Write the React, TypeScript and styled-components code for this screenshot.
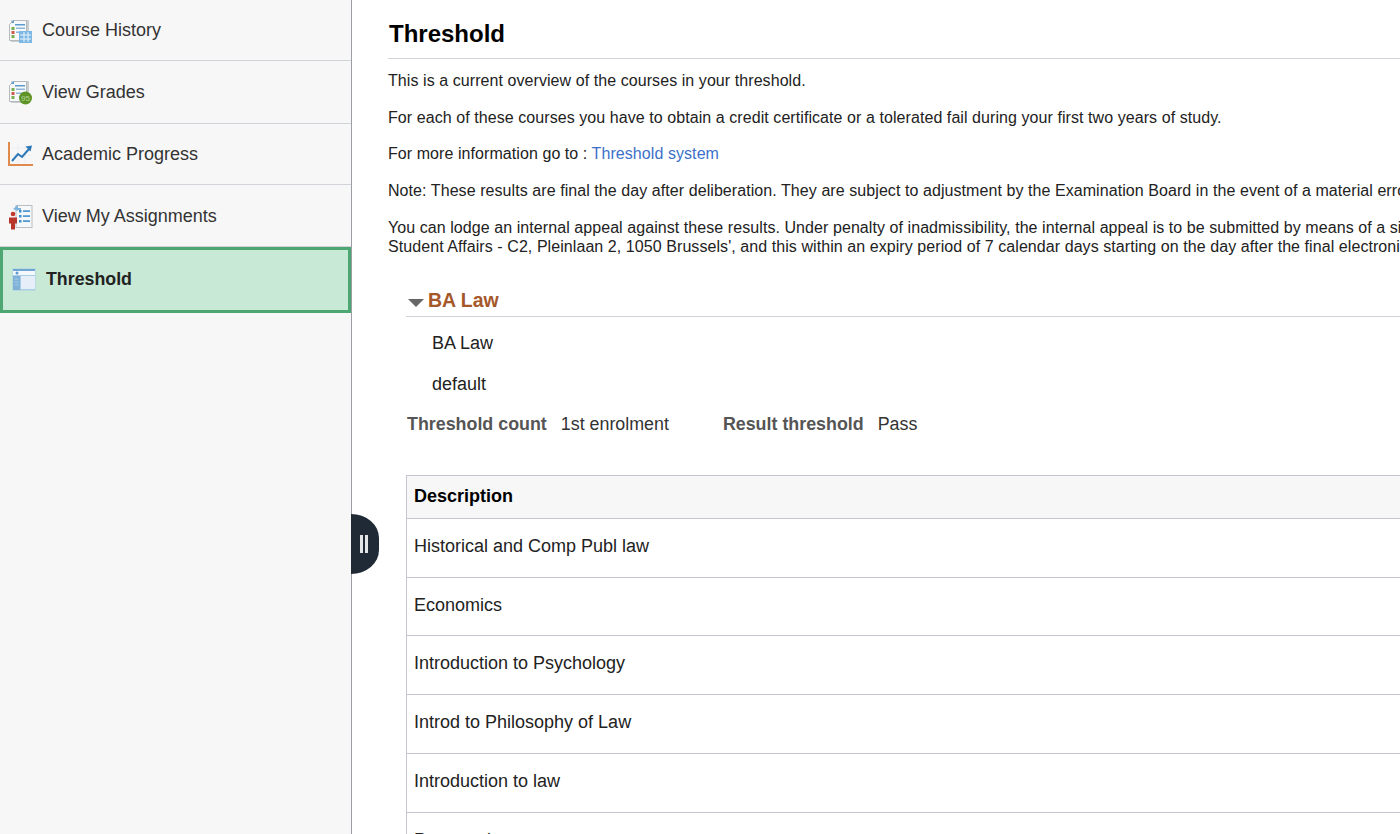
import React from 'react';
import styled, { createGlobalStyle } from 'styled-components';

const GlobalStyle = createGlobalStyle`
  html, body {
    margin: 0;
    padding: 0;
    height: 100%;
    overflow: hidden;
    background: #fff;
    font-family: "Liberation Sans", Arial, sans-serif;
  }
  #root {
    height: 100%;
  }
`;

const Page = styled.div`
  display: flex;
  width: 1400px;
  height: 834px;
  overflow: hidden;
`;

const Sidebar = styled.nav`
  flex: 0 0 351px;
  position: relative;
  background: #f7f7f7;
  border-right: 1px solid #9b9fa3;
`;

const NavItem = styled.a<{ $h: number; $nudge?: number }>`
  display: flex;
  align-items: center;
  gap: 9px;
  height: ${(p) => p.$h}px;
  box-sizing: border-box;
  padding-left: 8px;
  padding-top: ${(p) => p.$nudge || 0}px;
  border-bottom: 1px solid #d0d3d8;
  font-size: 18px;
  color: #333;
`;

const ActiveItem = styled.a`
  display: flex;
  align-items: center;
  gap: 10px;
  height: 66px;
  box-sizing: border-box;
  padding: 0 0 2px 9px;
  background: #c8e9d6;
  border: 3px solid #4ea672;
  font-size: 17.8px;
  font-weight: 700;
  color: #222;
`;

const Collapse = styled.button`
  position: absolute;
  top: 514px;
  left: 351px;
  z-index: 2;
  width: 28px;
  height: 60px;
  padding: 0 2px 0 0;
  border: 0;
  background: #1f2a36;
  border-radius: 0 28px 28px 0 / 0 24px 24px 0;
  display: flex;
  align-items: center;
  justify-content: center;
  gap: 2px;
`;

const CollapseBar = styled.span`
  width: 3px;
  height: 18px;
  background: #e3e5e7;
`;

const Main = styled.main`
  flex: 1;
  min-width: 0;
  padding: 0 0 0 36px;
`;

const Title = styled.h1`
  margin: 0;
  height: 59px;
  box-sizing: border-box;
  padding: 19px 0 0 1px;
  width: 1100px;
  border-bottom: 1px solid #d0d3d8;
  font-size: 24px;
  line-height: 29px;
  font-weight: 700;
  color: #000;
`;

const Intro = styled.div`
  padding-top: 12px;
  width: 1100px;
`;

const Para = styled.p`
  margin: 0 0 17.7px;
  font-size: 16px;
  line-height: 19px;
  letter-spacing: 0.07px;
  color: #222;
  white-space: nowrap;
`;

const ThresholdLink = styled.a`
  color: #3c6fc9;
`;

const Group = styled.section`
  margin-left: 18px;
  width: 1100px;
`;

const GroupHeader = styled.div`
  display: flex;
  align-items: center;
  gap: 4px;
  height: 31px;
  margin-top: 30px;
  padding-left: 2px;
  box-sizing: border-box;
  border-bottom: 1px solid #d0d3d8;
  font-size: 19.5px;
  font-weight: 700;
  color: #a5582a;
`;

const Caret = styled.span`
  width: 0;
  height: 0;
  margin-top: 4px;
  border-left: 8px solid transparent;
  border-right: 8px solid transparent;
  border-top: 8px solid #666;
`;

const Details = styled.div`
  padding-top: 6px;
`;

const Plain = styled.div`
  padding-left: 26px;
  height: 41px;
  display: flex;
  align-items: center;
  font-size: 18px;
  color: #222;
`;

const Summary = styled.div`
  display: flex;
  align-items: center;
  height: 39px;
  padding-left: 1px;
  font-size: 17.85px;
  color: #333;
`;

const SummaryLabel = styled.span`
  font-weight: 700;
  color: #555;
  margin-right: 14px;
`;

const SummaryValue = styled.span`
  margin-right: 54px;
`;

const Table = styled.div`
  margin-top: 31px;
  border-left: 1px solid #c4c8ce;
  border-top: 1px solid #c4c8ce;
`;

const HeadCell = styled.div`
  height: 43px;
  box-sizing: border-box;
  padding-left: 7px;
  display: flex;
  align-items: center;
  background: #f7f7f7;
  border-bottom: 1px solid #c4c8ce;
  font-size: 18px;
  font-weight: 700;
  color: #000;
`;

const Cell = styled.div`
  height: 58.8px;
  box-sizing: border-box;
  padding: 16px 0 0 7px;
  border-bottom: 1px solid #c4c8ce;
  font-size: 18px;
  line-height: 22px;
  color: #222;
`;

const IconSvg = styled.svg`
  flex: none;
  display: block;
`;

const DocBase = () => (
  <>
    <rect x="3" y="3" width="18" height="22" fill="#c9cdd0" />
    <path d="M1.500 7.500l4-4h13v20h-17z" fill="#f6f8fa" stroke="#b5babd" />
    <path d="M3 6l3-3v3z" fill="#5b9bd0" />
    <rect x="7" y="7" width="10" height="1.500" fill="#5b9bd0" />
    <rect x="3.500" y="10" width="3" height="3" fill="#79ad4e" />
    <rect x="8" y="10.500" width="9" height="1.500" fill="#8fb8d8" />
    <rect x="3.500" y="14" width="3" height="3" fill="#d0584c" />
    <rect x="8" y="14.500" width="9" height="1.500" fill="#8fb8d8" />
    <rect x="3.500" y="18" width="3" height="3" fill="#79ad4e" />
  </>
);

const HistoryIcon = () => (
  <IconSvg width="25" height="28" viewBox="0 0 25 28">
    <DocBase />
    <rect x="11" y="14" width="13" height="12" fill="#7db8e4" />
    <path d="M12 18h11M12 22h11M16 15v10M20 15v10" stroke="#e8f3fb" strokeWidth="1" />
  </IconSvg>
);

const GradesIcon = () => (
  <IconSvg width="25" height="28" viewBox="0 0 25 28">
    <DocBase />
    <circle cx="17.500" cy="20" r="6.500" fill="#5d9425" />
    <text x="17.500" y="23" textAnchor="middle" fontSize="8" fontFamily="Liberation Sans" fill="#b5d69a">95</text>
  </IconSvg>
);

const ProgressIcon = () => (
  <IconSvg width="25" height="28" viewBox="0 0 25 28">
    <path d="M10 3v20M17 3v20M3 8h21M3 15h21" stroke="#eceef0" strokeWidth="1" />
    <path d="M1 2v23h24" fill="none" stroke="#e08a4e" strokeWidth="2" />
    <path d="M4 21l6-7 4 3 7-8" fill="none" stroke="#2c78b8" strokeWidth="2" />
    <path d="M24 5.500l-6.500 1 5 5z" fill="#2c78b8" />
  </IconSvg>
);

const AssignmentsIcon = () => (
  <IconSvg width="25" height="28" viewBox="0 0 25 28">
    <rect x="8" y="2.500" width="16" height="22" fill="#f6f8fa" stroke="#b9bec2" />
    <path d="M5 6l5-4v3h3v2h-3v1z" fill="#7fb4dc" />
    <rect x="11" y="7" width="2.500" height="2.500" fill="#3f8fcc" />
    <rect x="15" y="7.300" width="7" height="1.600" fill="#3f8fcc" />
    <rect x="11" y="12" width="2.500" height="2.500" fill="#3f8fcc" />
    <rect x="15" y="12.300" width="7" height="1.600" fill="#3f8fcc" />
    <rect x="11" y="17" width="2.500" height="2.500" fill="#3f8fcc" />
    <rect x="15" y="17.300" width="7" height="1.600" fill="#3f8fcc" />
    <circle cx="5" cy="11" r="2.300" fill="#c4392d" />
    <path d="M1 14.500h8v6H7v6H3v-6H1z" fill="#b8352b" />
  </IconSvg>
);

const ThresholdIcon = () => (
  <IconSvg width="24" height="23" viewBox="0 0 24 23">
    <rect x="0.500" y="0.500" width="23" height="22" fill="#a9cde6" />
    <rect x="1" y="1" width="22" height="2" fill="#6fa7d4" />
    <rect x="1" y="3" width="22" height="4" fill="#f4f8fc" />
    <circle cx="5" cy="5" r="1.500" fill="#5b9bd0" />
    <rect x="9" y="8" width="14" height="13" fill="#e6eefa" />
    <rect x="1" y="8" width="7" height="14" fill="#7eb0d8" />
    <path d="M2.500 11h4M2.500 14h4M2.500 17h4" stroke="#a9cde6" strokeWidth="1" />
  </IconSvg>
);

const rows = [
  'Historical and Comp Publ law',
  'Economics',
  'Introduction to Psychology',
  'Introd to Philosophy of Law',
  'Introduction to law',
  'Property law',
];

export default function App() {
  return (
    <Page>
      <GlobalStyle />
      <Sidebar>
        <NavItem $h={61} $nudge={1}><HistoryIcon />Course History</NavItem>
        <NavItem $h={63}><GradesIcon />View Grades</NavItem>
        <NavItem $h={61}><ProgressIcon />Academic Progress</NavItem>
        <NavItem $h={62} $nudge={2}><AssignmentsIcon />View My Assignments</NavItem>
        <ActiveItem><ThresholdIcon />Threshold</ActiveItem>
        <Collapse aria-label="Collapse">
          <CollapseBar />
          <CollapseBar />
        </Collapse>
      </Sidebar>
      <Main>
        <Title>Threshold</Title>
        <Intro>
          <Para>This is a current overview of the courses in your threshold.</Para>
          <Para>For each of these courses you have to obtain a credit certificate or a tolerated fail during your first two years of study.</Para>
          <Para>For more information go to : <ThresholdLink>Threshold system</ThresholdLink></Para>
          <Para>Note: These results are final the day after deliberation. They are subject to adjustment by the Examination Board in the event of a material error.</Para>
          <Para>
            You can lodge an internal appeal against these results. Under penalty of inadmissibility, the internal appeal is to be submitted by means of a signed<br />
            Student Affairs - C2, Pleinlaan 2, 1050 Brussels', and this within an expiry period of 7 calendar days starting on the day after the final electronic
          </Para>
        </Intro>
        <Group>
          <GroupHeader><Caret />BA Law</GroupHeader>
          <Details>
            <Plain>BA Law</Plain>
            <Plain>default</Plain>
            <Summary>
              <SummaryLabel>Threshold count</SummaryLabel>
              <SummaryValue>1st enrolment</SummaryValue>
              <SummaryLabel>Result threshold</SummaryLabel>
              <SummaryValue>Pass</SummaryValue>
            </Summary>
          </Details>
          <Table>
            <HeadCell>Description</HeadCell>
            {rows.map((r) => (
              <Cell key={r}>{r}</Cell>
            ))}
          </Table>
        </Group>
      </Main>
    </Page>
  );
}
